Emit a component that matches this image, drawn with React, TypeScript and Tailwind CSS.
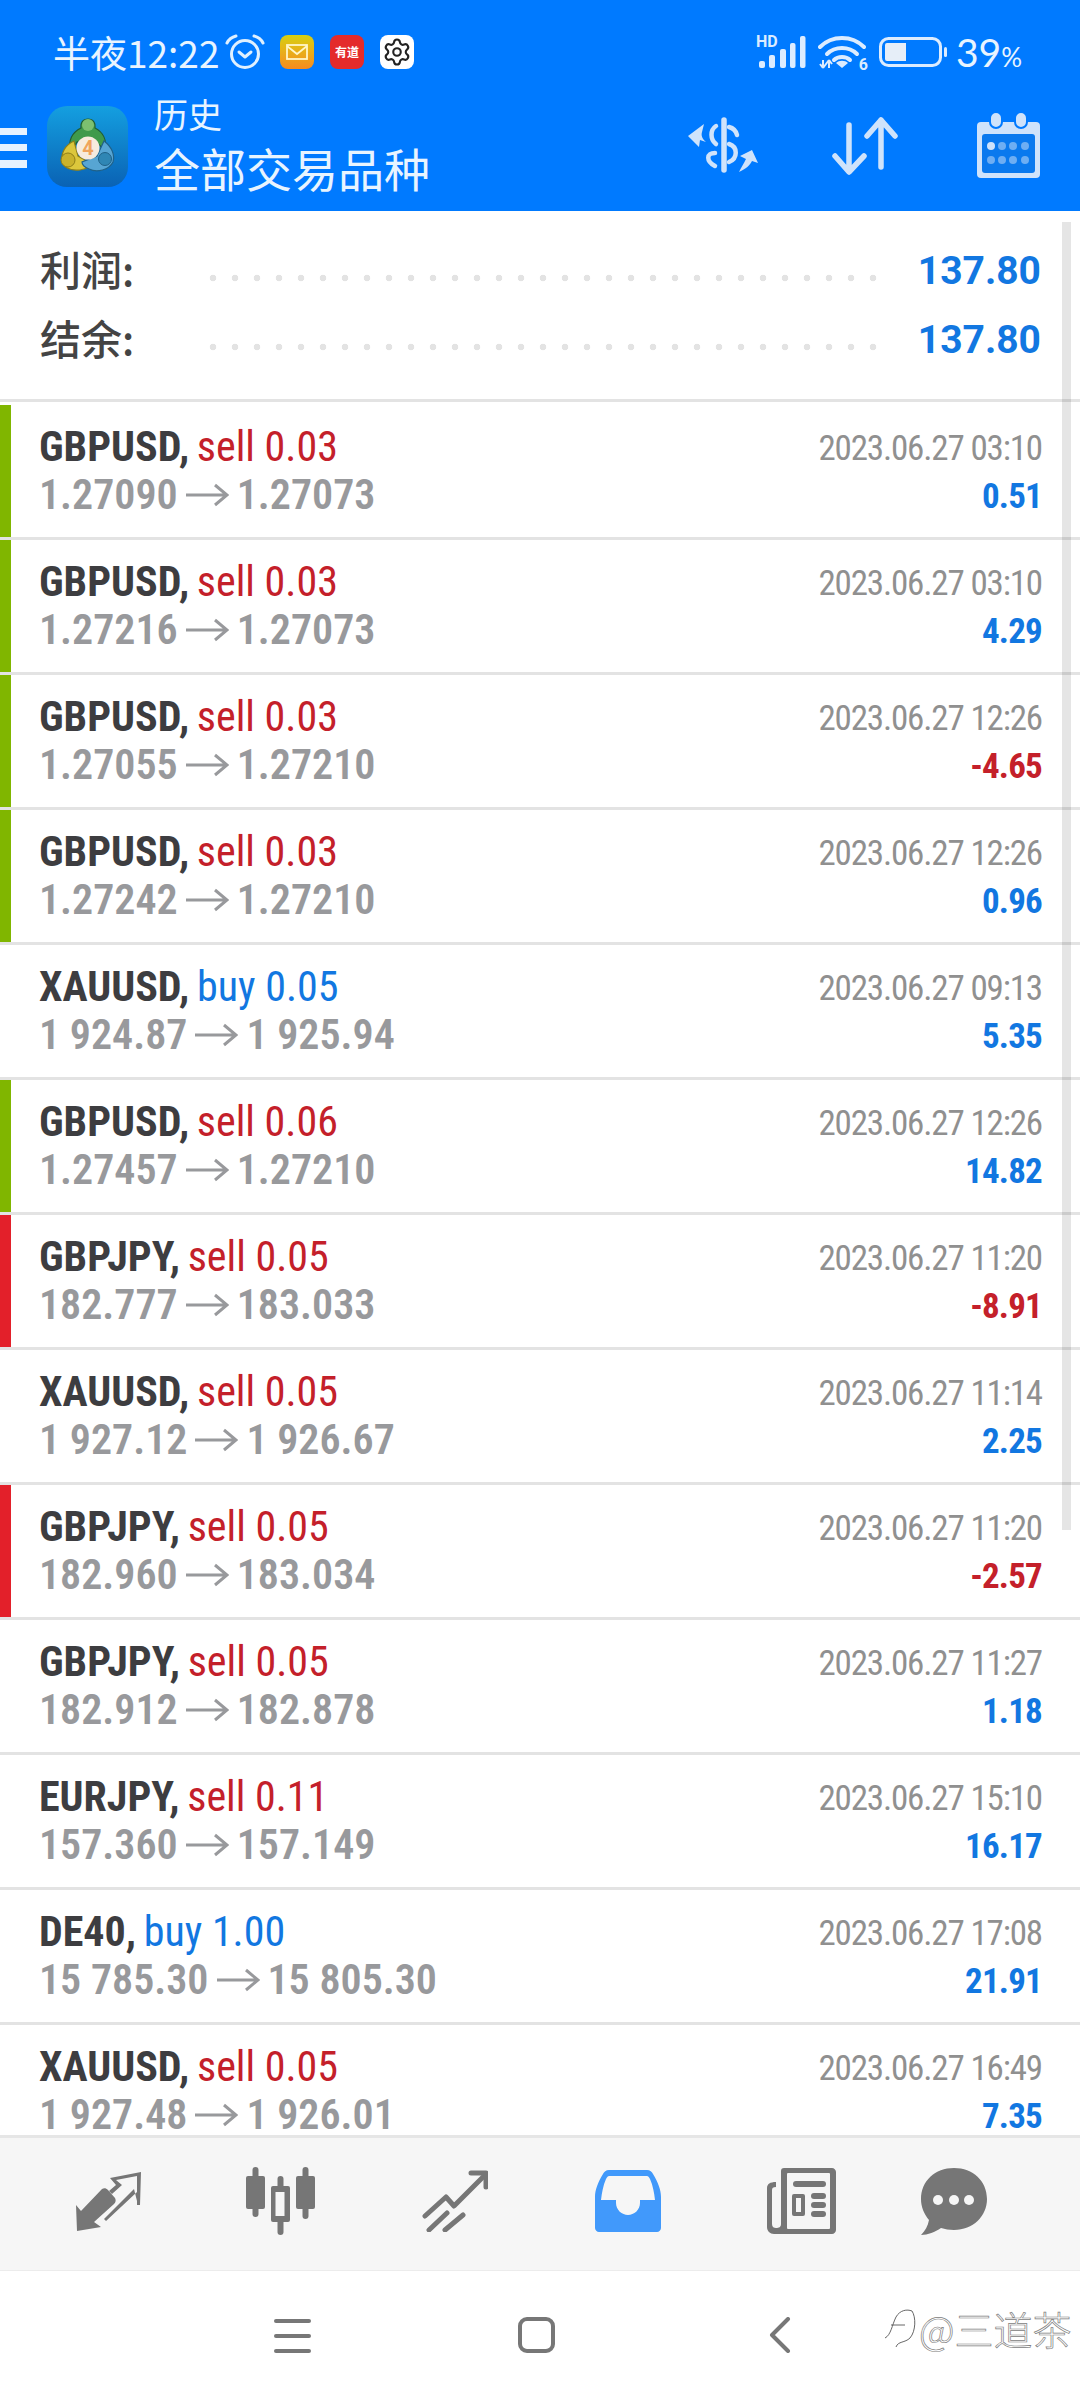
import React from "react";
import { Settings } from "lucide-react";

type Trade = {
  symbol: string;
  side: "sell" | "buy";
  volume: string;
  open: string;
  close: string;
  time: string;
  profit: string;
  bar?: "green" | "red";
};

const trades: Trade[] = [
  { symbol: "GBPUSD", side: "sell", volume: "0.03", open: "1.27090", close: "1.27073", time: "2023.06.27 03:10", profit: "0.51", bar: "green" },
  { symbol: "GBPUSD", side: "sell", volume: "0.03", open: "1.27216", close: "1.27073", time: "2023.06.27 03:10", profit: "4.29", bar: "green" },
  { symbol: "GBPUSD", side: "sell", volume: "0.03", open: "1.27055", close: "1.27210", time: "2023.06.27 12:26", profit: "-4.65", bar: "green" },
  { symbol: "GBPUSD", side: "sell", volume: "0.03", open: "1.27242", close: "1.27210", time: "2023.06.27 12:26", profit: "0.96", bar: "green" },
  { symbol: "XAUUSD", side: "buy", volume: "0.05", open: "1 924.87", close: "1 925.94", time: "2023.06.27 09:13", profit: "5.35" },
  { symbol: "GBPUSD", side: "sell", volume: "0.06", open: "1.27457", close: "1.27210", time: "2023.06.27 12:26", profit: "14.82", bar: "green" },
  { symbol: "GBPJPY", side: "sell", volume: "0.05", open: "182.777", close: "183.033", time: "2023.06.27 11:20", profit: "-8.91", bar: "red" },
  { symbol: "XAUUSD", side: "sell", volume: "0.05", open: "1 927.12", close: "1 926.67", time: "2023.06.27 11:14", profit: "2.25" },
  { symbol: "GBPJPY", side: "sell", volume: "0.05", open: "182.960", close: "183.034", time: "2023.06.27 11:20", profit: "-2.57", bar: "red" },
  { symbol: "GBPJPY", side: "sell", volume: "0.05", open: "182.912", close: "182.878", time: "2023.06.27 11:27", profit: "1.18" },
  { symbol: "EURJPY", side: "sell", volume: "0.11", open: "157.360", close: "157.149", time: "2023.06.27 15:10", profit: "16.17" },
  { symbol: "DE40", side: "buy", volume: "1.00", open: "15 785.30", close: "15 805.30", time: "2023.06.27 17:08", profit: "21.91" },
  { symbol: "XAUUSD", side: "sell", volume: "0.05", open: "1 927.48", close: "1 926.01", time: "2023.06.27 16:49", profit: "7.35" },
];

function AlarmIcon() {
  return (
    <svg width="40" height="36" viewBox="0 0 40 36" fill="none" stroke="#dff0ff" strokeWidth="3" strokeLinecap="round" strokeLinejoin="round">
      <circle cx="20" cy="20" r="13.5" />
      <path d="M14 18l6 5 6-5" />
      <path d="M2 9 C4 5 7 3 11 2" />
      <path d="M38 9 C36 5 33 3 29 2" />
    </svg>
  );
}

function MailBadge() {
  return (
    <div className="flex h-[34px] w-[34px] items-center justify-center rounded-[8px] bg-gradient-to-b from-[#d6cf10] to-[#f58a1f]">
      <svg width="22" height="16" viewBox="0 0 22 16" fill="none" stroke="#fff6c8" strokeWidth="1.8">
        <rect x="1" y="1" width="20" height="14" />
        <path d="M1 2l10 8 10-8" />
      </svg>
    </div>
  );
}

function SignalIcon() {
  return (
    <svg width="50" height="32" viewBox="0 0 50 32" fill="#dcecff">
      <rect x="3" y="25" width="6" height="7" rx="2" />
      <rect x="13" y="19" width="6" height="13" rx="2" />
      <rect x="24" y="13" width="6" height="19" rx="2" />
      <rect x="34" y="7" width="5.5" height="25" rx="2" />
      <rect x="44" y="0" width="5.5" height="32" rx="2" />
    </svg>
  );
}

function WifiIcon() {
  return (
    <svg width="48" height="35" viewBox="0 0 48 35" fill="none">
      <g stroke="#dcecff" strokeWidth="4" strokeLinecap="round">
        <path d="M2 12 C14 0 34 0 46 12" />
        <path d="M9 19 C17 11 31 11 39 19" />
        <path d="M16 25 C20 21 28 21 32 25" />
      </g>
      <path d="M24 33 L18 28 C21 25 27 25 30 28 Z" fill="#dcecff" />
      <path d="M5 25 v8 M5 33 l-3 -4 M5 33 l3 -4 M11 33 v-8 M11 25 l-3 4 M11 25 l3 4" stroke="#dcecff" strokeWidth="2" />
    </svg>
  );
}

function BatteryIcon() {
  return (
    <svg width="68" height="30" viewBox="0 0 68 30" fill="none">
      <rect x="1.5" y="1.5" width="60" height="27" rx="8" stroke="#dcecff" strokeWidth="3" />
      <path d="M8 6 H27 V24 H8 Q6 24 6 22 V8 Q6 6 8 6Z" fill="#e6eef8" />
      <rect x="65" y="10" width="3" height="10" rx="1.5" fill="#dcecff" />
    </svg>
  );
}

function ExchangeIcon() {
  return (
    <svg width="73" height="56" viewBox="0 0 73 56" fill="none" stroke="#cfe3fb" strokeLinecap="round">
      <path d="M38 3 V53" strokeWidth="5.5" />
      <path d="M30 9 C24 13 24 22 30 27" strokeWidth="4.5" />
      <path d="M43 10 C47 11 50 14 51 18" strokeWidth="4.5" />
      <path d="M43 27 C52 30 52 41 43 45" strokeWidth="4.5" />
      <path d="M29 36 C20 36 20 44 29 49" strokeWidth="4.5" />
      <path d="M18 7 L2 19 L13 30 L14 23 L20 25 C16 22 15 18 16 15Z" fill="#cfe3fb" stroke="none" />
      <path d="M72 46 L66 33 L54 39 L60 42 C58 46 55 51 53 55 C60 52 64 48 66 44Z" fill="#cfe3fb" stroke="none" />
    </svg>
  );
}

function SortIcon() {
  return (
    <svg width="66" height="58" viewBox="0 0 66 58" fill="none" stroke="#cfe3fb" strokeWidth="5.5" strokeLinecap="round" strokeLinejoin="round">
      <path d="M17 8 V54 M3 39 L17 55 L32 39" />
      <path d="M49 3 V50 M35 19 L49 3 L63 19" />
    </svg>
  );
}

function CalendarIcon() {
  return (
    <svg width="63" height="66" viewBox="0 0 63 66" fill="none">
      <rect x="0" y="10" width="63" height="56" rx="4" fill="#cfe3fb" />
      <rect x="5" y="22" width="53" height="39" rx="3" fill="#0a79ee" />
      <rect x="13" y="0" width="12" height="16" rx="6" fill="#cfe3fb" stroke="#007aff" strokeWidth="2" />
      <rect x="38" y="0" width="12" height="16" rx="6" fill="#cfe3fb" stroke="#007aff" strokeWidth="2" />
      <circle cx="14" cy="34" r="4" fill="#cfe3fb" />
      {[25, 36, 48].map((x) => (
        <circle key={x} cx={x} cy="34" r="4" fill="#6eaef3" />
      ))}
      {[14, 25, 36, 48].map((x) => (
        <circle key={x} cx={x} cy="48" r="4" fill="#6eaef3" />
      ))}
    </svg>
  );
}

function TerminalLogo() {
  return (
    <svg width="81" height="81" viewBox="0 0 81 81">
      <defs>
        <linearGradient id="tile" x1="0" y1="0" x2="0" y2="1">
          <stop offset="0" stopColor="#149fe0" />
          <stop offset="1" stopColor="#0a62b4" />
        </linearGradient>
      </defs>
      <rect width="81" height="81" rx="20" fill="url(#tile)" />
      {/* three linked figures around the version badge */}
      <path d="M41 13 C46 13 49 17 48 22 C56 26 60 34 58 44 L44 32 L30 36 L24 46 C20 34 26 26 34 22 C33 17 36 13 41 13Z" fill="#3f9a4b" stroke="#225c30" strokeWidth="1.2" />
      <circle cx="41" cy="19" r="6" fill="#7cc070" />
      <path d="M27 35 C18 39 14 47 15 55 C17 62 24 65 33 64 C39 63 43 61 45 58 L31 50Z" fill="#dcc73c" stroke="#8f7f18" strokeWidth="1.2" />
      <circle cx="21" cy="54" r="7" fill="#c9b22c" stroke="#8f7f18" strokeWidth="1" />
      <path d="M57 35 C65 41 68 49 66 56 C62 64 50 67 42 63 C37 61 35 58 35 56 L50 50Z" fill="#57a5d3" stroke="#1f6188" strokeWidth="1.2" />
      <circle cx="58" cy="53" r="6.5" fill="#2f86b4" stroke="#1f6188" strokeWidth="1" />
      <circle cx="41" cy="42" r="11.5" fill="#f7ebdd" />
      <text x="41" y="49" textAnchor="middle" fontSize="20" fontWeight="700" fontFamily="Roboto, sans-serif" fill="#f0a45c">4</text>
    </svg>
  );
}

function TradeNavIcon() {
  return (
    <svg width="66" height="60" viewBox="0 0 66 60" fill="#767676">
      <path d="M0 34 L5 40 L26 18 C28 17 30 17 32 19 L39 27 C40 29 40 31 38 33 L18 51 L25 56 L1 60 Z" />
      <path d="M34 7 L65 1 L64 34 L61 34 L61 21 L30 50 L28 48 L58 18 L61 30 L61 5 L40 9 L46 14 L36 23 L33 20 L40 14 Z" />
    </svg>
  );
}

function CandlesIcon() {
  return (
    <svg width="70" height="68" viewBox="0 0 70 68" fill="#767676">
      <rect x="0" y="9" width="19" height="33" rx="2" />
      <rect x="6.5" y="0" width="6" height="50" rx="3" />
      <rect x="50" y="9" width="19" height="33" rx="2" />
      <rect x="56.5" y="0" width="6" height="52" rx="3" />
      <rect x="31.5" y="9" width="6" height="59" rx="3" />
      <rect x="25" y="19" width="19" height="36" rx="2" />
      <rect x="29.5" y="25" width="9" height="24" fill="#f6f6f6" />
    </svg>
  );
}

function ChartNavIcon() {
  return (
    <svg width="66" height="62" viewBox="0 0 66 62" fill="none" stroke="#767676" strokeWidth="5" strokeLinecap="round" strokeLinejoin="round">
      <path d="M3 46 L24 27 L32 36 L62 6" />
      <path d="M49 3 H64 V17" />
      <path d="M7 60 L25 43" />
      <path d="M23 60 L41 45" />
    </svg>
  );
}

function TrayIcon() {
  return (
    <svg width="66" height="62" viewBox="0 0 66 62" fill="none">
      <path d="M14 0 H52 C55 0 57 2 58 4 C63 12 66 20 66 27 V58 C66 60 64 62 62 62 H4 C2 62 0 60 0 58 V27 C0 20 3 12 8 4 C9 2 11 0 14 0Z" fill="#4199fb" />
      <path d="M14 6 C13 6 12 7 11 9 C8 16 7 22 6 30 H21 V33 C21 40 27 45 33 45 C39 45 45 40 45 33 V30 H60 C59 22 58 16 55 9 C54 7 53 6 52 6Z" fill="#f6f6f6" />
    </svg>
  );
}

function NewsIcon() {
  return (
    <svg width="69" height="66" viewBox="0 0 69 66">
      <path d="M17 0 H65 C67 0 69 2 69 4 V62 C69 64 67 66 65 66 H7 C3 66 0 63 0 59 V20 C0 16 3 14 9 14 V19 C6 19 5 20 5 22 V56 C5 59 7 60 9 60 C12 60 14 59 14 56 V3 C14 1 15 0 17 0Z" fill="#767676" />
      <rect x="20" y="5" width="43" height="56" rx="1" fill="#f6f6f6" />
      <rect x="26" y="13" width="33" height="6" rx="3" fill="#767676" />
      <rect x="25" y="26" width="13" height="22" rx="2" fill="#767676" />
      <rect x="29" y="30" width="5" height="14" fill="#f6f6f6" />
      <rect x="44" y="25" width="15" height="6" rx="3" fill="#767676" />
      <rect x="44" y="34" width="15" height="6" rx="3" fill="#767676" />
      <rect x="44" y="43" width="15" height="6" rx="3" fill="#767676" />
    </svg>
  );
}

function ChatIcon() {
  return (
    <svg width="66" height="67" viewBox="0 0 66 67">
      <path d="M33 0 C52 0 66 13 66 31 C66 48 52 62 33 62 C28 62 24 61 20 60 C14 64 7 67 0 67 C4 63 7 58 8 52 C3 46 0 39 0 31 C0 13 14 0 33 0Z" fill="#767676" />
      <circle cx="17" cy="32" r="5" fill="#f6f6f6" />
      <circle cx="33" cy="32" r="5" fill="#f6f6f6" />
      <circle cx="48" cy="32" r="5" fill="#f6f6f6" />
    </svg>
  );
}

function TradeRow({ trade }: { trade: Trade }) {
  const isSell = trade.side === "sell";
  return (
    <div className="group relative flex h-[135px] shrink-0 items-start justify-between border-b-[3px] border-[#e3e3e3] pl-[39px] pr-[38px] pt-[18px] first:h-[138px] first:pt-[21px]">
      {trade.bar && (
        <div className={`absolute bottom-0 left-0 top-0 w-[11px] group-first:top-[3px] ${trade.bar === "green" ? "bg-[#80b600]" : "bg-[#e3202a]"}`} />
      )}
      <div className="flex flex-col font-['Roboto_Condensed',Roboto,sans-serif] text-[42px] leading-[48px] [font-stretch:condensed]">
        <div className="whitespace-nowrap">
          <span className="font-bold text-[#3d3d40]">{trade.symbol},</span>{" "}
          <span className={`ml-[-2px] ${isSell ? "text-[#c4202a]" : "text-[#1277e1]"}`}>
            {trade.side} {trade.volume}
          </span>
        </div>
        <div className="flex items-center gap-[8px] whitespace-nowrap font-semibold text-[#98999c]">
          <span>{trade.open}</span>
          <svg width="43" height="24" viewBox="0 0 43 24" fill="none" stroke="#98999c" strokeWidth="3">
            <path d="M0 12 H40 M29 2 L41 12 L29 22" />
          </svg>
          <span>{trade.close}</span>
        </div>
      </div>
      <div className="mt-[2px] flex flex-col items-end font-['Roboto_Condensed',Roboto,sans-serif] text-[35px] leading-[48px] [font-stretch:condensed]">
        <span className="whitespace-nowrap tracking-[-1.15px] text-[#909090]">{trade.time}</span>
        <span className={`font-bold tracking-[-0.8px] ${trade.profit.startsWith("-") ? "text-[#c4202a]" : "text-[#1277e1]"}`}>{trade.profit}</span>
      </div>
    </div>
  );
}

function SummaryRow({ label, value }: { label: string; value: string }) {
  return (
    <div className="flex h-[69px] items-center">
      <span className="mt-[-4px] w-[162px] shrink-0 font-['Noto_Sans_CJK_SC',sans-serif] text-[41px] font-medium leading-none text-[#444444]">{label}</span>
      <div className="mt-[14px] h-[8px] flex-1 bg-[radial-gradient(circle,#e3e3e3_3px,transparent_3.6px)] bg-[length:22px_8px]" />
      <span className="mt-[2px] w-[163px] shrink-0 text-right font-['Roboto',sans-serif] text-[39px] font-bold text-[#1277e1]">{value}</span>
    </div>
  );
}

export default function App() {
  return (
    <div className="relative flex h-[2400px] w-[1080px] flex-col overflow-hidden bg-white">
      <header className="flex h-[211px] shrink-0 flex-col bg-[#007aff] text-[#e8f4ff]">
        <div className="flex h-[92px] items-center justify-between pl-[53px] pr-[58px] pt-[12px]">
          <div className="flex items-center">
            <span className="w-[172px] whitespace-nowrap font-['Noto_Sans_CJK_SC',sans-serif] text-[37px] leading-none">半夜12:22</span>
            <AlarmIcon />
            <div className="ml-[15px]"><MailBadge /></div>
            <div className="ml-[16px] flex h-[34px] w-[34px] items-center justify-center rounded-[8px] bg-[#e42b2b] font-['Noto_Sans_CJK_SC',sans-serif] text-[12px] font-bold leading-none text-white">有道</div>
            <div className="ml-[16px] flex h-[34px] w-[34px] items-center justify-center rounded-[8px] bg-white">
              <Settings size={30} strokeWidth={1.7} color="#222222" />
            </div>
          </div>
          <div className="flex items-center">
            <div className="relative">
              <SignalIcon />
              <span className="absolute left-0 top-[-2px] font-['Roboto',sans-serif] text-[16px] font-bold leading-none text-[#dcecff]">HD</span>
            </div>
            <div className="relative ml-[12px]">
              <WifiIcon />
              <span className="absolute bottom-[-3px] right-[-2px] font-['Roboto',sans-serif] text-[16px] font-bold leading-none text-[#dcecff]">6</span>
            </div>
            <div className="ml-[13px]"><BatteryIcon /></div>
            <span className="ml-[9px] font-['Lato',sans-serif] text-[39px] leading-none">39<span className="text-[26px]">%</span></span>
          </div>
        </div>
        <div className="relative flex flex-1 items-start">
          <div className="ml-0 mt-[36px] flex w-[27px] flex-col gap-[9px]">
            <div className="h-[7px] bg-[#e6f2ff]" />
            <div className="h-[7px] bg-[#e6f2ff]" />
            <div className="h-[8px] bg-[#e6f2ff]" />
          </div>
          <div className="ml-[20px] mt-[14px]"><TerminalLogo /></div>
          <div className="ml-[26px] mt-[-2px] flex flex-col font-['Noto_Sans_CJK_SC',sans-serif]">
            <span className="text-[34px] leading-[48px]">历史</span>
            <span className="text-[46px] leading-[58px]">全部交易品种</span>
          </div>
          <div className="ml-auto mr-[40px] mt-[20px] flex items-start">
            <div className="mt-[5px]"><ExchangeIcon /></div>
            <div className="ml-[73px] mt-[5px]"><SortIcon /></div>
            <div className="ml-[79px]"><CalendarIcon /></div>
          </div>
        </div>
      </header>

      <section className="h-[191px] shrink-0 border-b-[3px] border-[#e3e3e3] pl-[40px] pr-[39px] pt-[25px]">
        <SummaryRow label="利润:" value="137.80" />
        <SummaryRow label="结余:" value="137.80" />
      </section>

      <main className="min-h-0 flex-1 overflow-hidden">
        {trades.map((trade, index) => (
          <TradeRow key={index} trade={trade} />
        ))}
      </main>

      <nav className="flex h-[135px] shrink-0 items-center border-t-[3px] border-[#e6e6e6] bg-[#f6f6f6] pb-[6px] pl-[76px]">
        <TradeNavIcon />
        <div className="ml-[104px]"><CandlesIcon /></div>
        <div className="ml-[106px]"><ChartNavIcon /></div>
        <div className="ml-[107px]"><TrayIcon /></div>
        <div className="ml-[106px]"><NewsIcon /></div>
        <div className="ml-[85px]"><ChatIcon /></div>
      </nav>

      <footer className="relative flex h-[130px] shrink-0 items-start border-t border-[#ececec] pt-[46px]">
        <div className="ml-[274px] mt-[2px] flex w-[37px] flex-col gap-[11px]">
          <div className="h-[4px] rounded-full bg-[#777777]" />
          <div className="h-[4px] rounded-full bg-[#777777]" />
          <div className="h-[4px] rounded-full bg-[#777777]" />
        </div>
        <div className="ml-[207px] h-[36px] w-[37px] rounded-[9px] border-[4px] border-[#777777]" />
        <svg className="ml-[214px]" width="22" height="36" viewBox="0 0 22 36" fill="none" stroke="#777777" strokeWidth="4" strokeLinecap="round" strokeLinejoin="round">
          <path d="M19 2 L3 18 L19 34" />
        </svg>
        <div className="absolute left-[883px] top-[34px] flex items-center">
          <svg width="34" height="46" viewBox="0 0 34 46" fill="none" stroke="#555555" strokeWidth="0.9">
            <path d="M2 33 C8 30 9 20 13 12 C17 5 24 4 29 6 C33 12 33 26 27 33 C22 38 15 36 13 42" />
            <path d="M8 20 H22" />
          </svg>
          <span className="ml-[2px] whitespace-nowrap font-['Noto_Sans_CJK_SC',sans-serif] text-[39px] font-light leading-none text-white [-webkit-text-stroke:0.7px_#808080]">@三道茶</span>
        </div>
      </footer>

      {/* Overlay scrollbar of the history list */}
      <div className="absolute left-[1062px] top-[222px] h-[1308px] w-[9px] bg-black/10" />
    </div>
  );
}
